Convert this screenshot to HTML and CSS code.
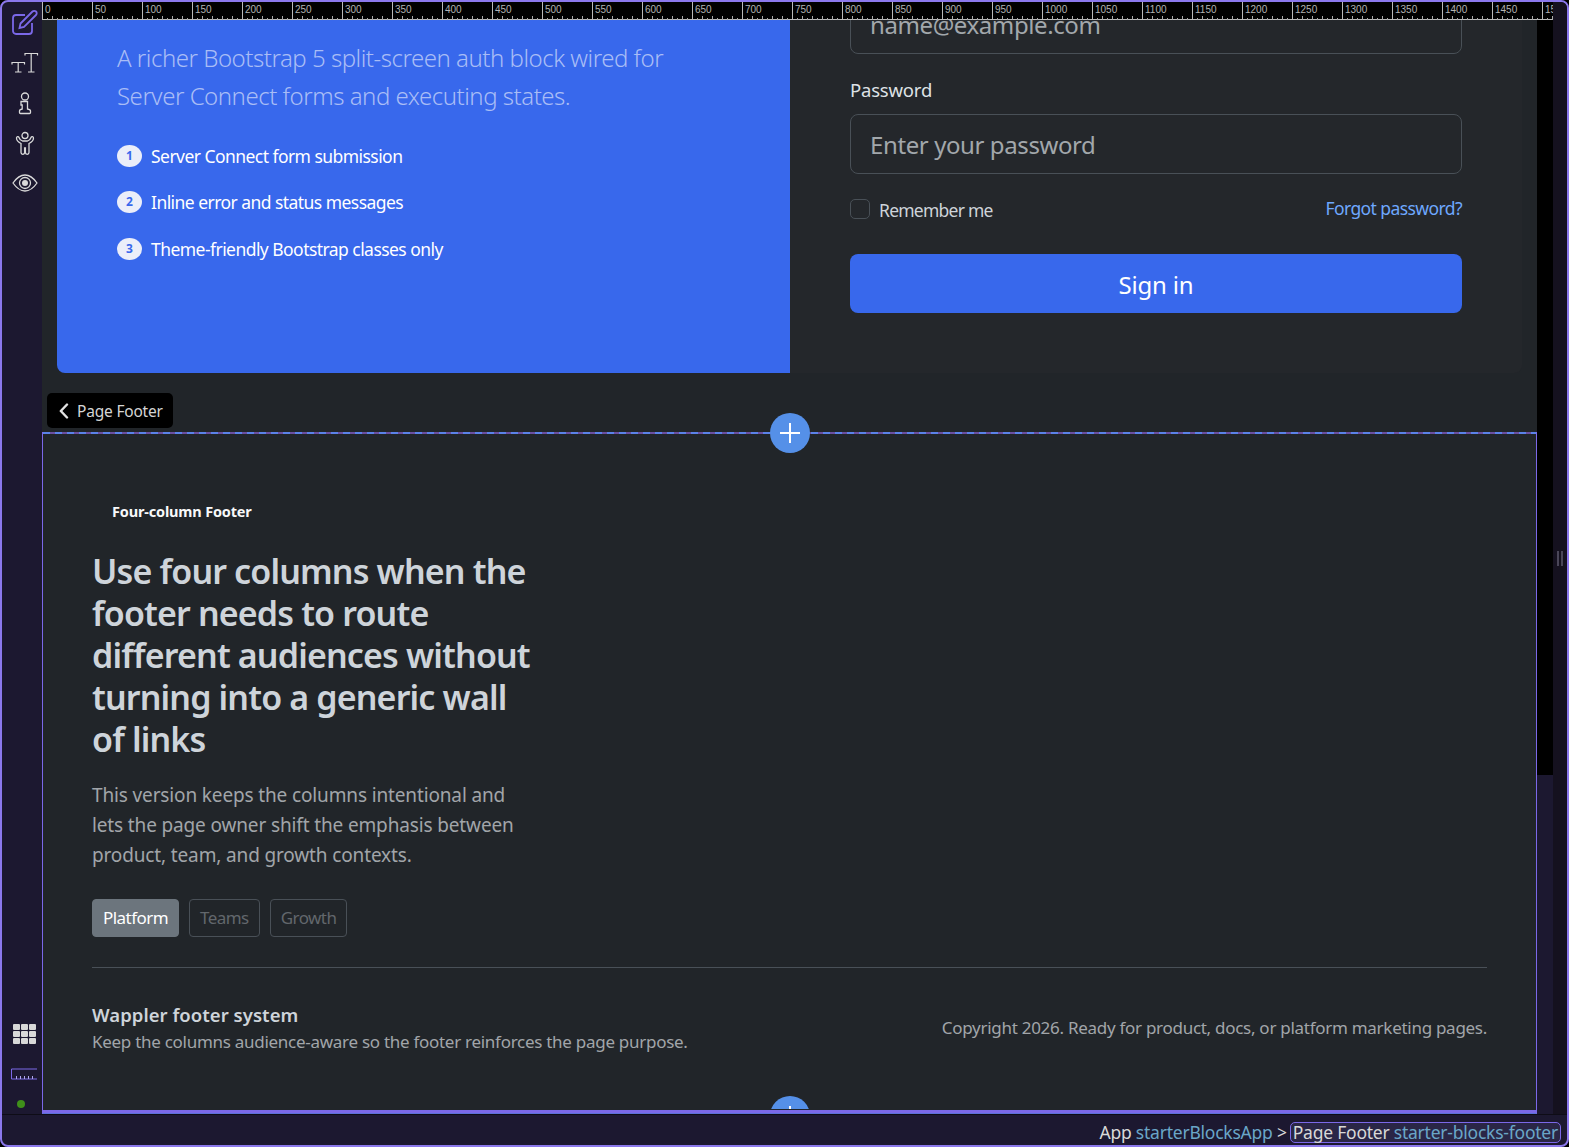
FILE: index.html
```html
<!DOCTYPE html>
<html lang="en">
<head>
  <meta charset="UTF-8" />
  <title>Page Footer - starterBlocksApp</title>
  <link rel="stylesheet" href="styles.css">
</head>
<body>
  <div class="frame">
    <div class="work">
      <!-- left tools -->
      <aside class="tools">
        <div class="tools-top">
          <div class="tool"><svg width="28" height="28" viewBox="0 0 28 28" fill="none" stroke="#7b68e8" stroke-width="1.800"><path d="M21 14v8a3 3 0 0 1-3 3H5a3 3 0 0 1-3-3V9a3 3 0 0 1 3-3h9"/><path d="M9.500 14.500 21.500 2.500a2.300 2.300 0 0 1 3.500 3.500L13 18l-4.500 1z"/></svg></div>
          <div class="tool"><svg width="28" height="24" viewBox="0 0 28 24" fill="none" stroke="#d9d9d9" stroke-width="1.200"><path d="M1 13.500V11.500h12.500v2M7.200 11.500V21M4 21h6.500"/><path d="M14 4.500V2.500h12.500v2M20.200 2.500V21M17 21h6.500"/></svg></div>
          <div class="tool"><svg width="16" height="24" viewBox="0 0 16 24" fill="none" stroke="#d9d9d9" stroke-width="1.300"><circle cx="8" cy="5.500" r="3.500"/><path d="M5 10.500h5.500v7.500c1.500.3 3 .8 3 2v1.500a1 1 0 0 1-1 1H3.500a1 1 0 0 1-1-1V20c0-1.200 1.300-1.700 2.700-2v-4H4v-3.500z"/></svg></div>
          <div class="tool"><svg width="20" height="24" viewBox="0 0 20 24" fill="none" stroke="#d9d9d9" stroke-width="1.300"><circle cx="10" cy="4.500" r="3"/><path d="M6 21.500V12.500C4 11.500 1.500 9.500 1.500 7c0-1.500 2-1.800 2.500-.5.5 1.800 2 3 3.500 3.500h5c1.500-.5 3-1.700 3.500-3.500.5-1.300 2.500-1 2.500.5 0 2.500-2.500 4.500-4.500 5.500v9a1.800 1.800 0 0 1-3.600 0V17h-.8v4.500a1.800 1.800 0 0 1-3.600 0z"/></svg></div>
          <div class="tool"><svg width="26" height="20" viewBox="0 0 26 20" fill="none" stroke="#d9d9d9" stroke-width="1.300"><path d="M1 10C5 4.300 9 2 13 2s8 2.300 12 8c-4 5.700-8 8-12 8s-8-2.300-12-8z"/><circle cx="13" cy="10" r="5.500"/><circle cx="13" cy="10" r="3" fill="#d9d9d9" stroke="none"/></svg></div>
        </div>
        <div class="tools-bottom">
          <div class="apps">
            <i></i><i></i><i></i><i></i><i></i><i></i><i></i><i></i><i></i>
          </div>
          <svg class="ruler-icon" width="27" height="12" viewBox="0 0 27 12" fill="none" stroke="#7b68e8" stroke-width="1"><path d="M27 1H1.500v10H27"/><path d="M6.500 11V8M10.500 11V8M14.500 11V8M18.500 11V8M22.500 11V8" stroke="#b0a6ee"/></svg>
          <span class="status-dot"></span>
        </div>
      </aside>

      <div class="center">
        <!-- ruler -->
        <div class="ruler">
          <span>0</span><span>50</span><span>100</span><span>150</span><span>200</span><span>250</span><span>300</span><span>350</span><span>400</span><span>450</span><span>500</span><span>550</span><span>600</span><span>650</span><span>700</span><span>750</span><span>800</span><span>850</span><span>900</span><span>950</span><span>1000</span><span>1050</span><span>1100</span><span>1150</span><span>1200</span><span>1250</span><span>1300</span><span>1350</span><span>1400</span><span>1450</span><span>1500</span>
        </div>

        <div class="stage">
          <div class="canvas">
            <!-- auth block -->
            <section class="auth">
              <div class="auth-blue">
                <p class="auth-lead">A richer Bootstrap 5 split-screen auth block wired for Server Connect forms and executing states.</p>
                <ul class="steps">
                  <li><b>1</b>Server Connect form submission</li>
                  <li><b>2</b>Inline error and status messages</li>
                  <li><b>3</b>Theme-friendly Bootstrap classes only</li>
                </ul>
              </div>
              <div class="auth-form">
                <div class="input">name@example.com</div>
                <label class="form-label">Password</label>
                <div class="input">Enter your password</div>
                <div class="form-row">
                  <label class="check"><span class="check-box"></span>Remember me</label>
                  <a class="forgot" href="#">Forgot password?</a>
                </div>
                <button class="signin">Sign in</button>
              </div>
            </section>

            <div class="footer-tab-row">
              <div class="footer-tab">
                <svg width="10" height="16" viewBox="0 0 10 16" fill="none" stroke="#e3e3e3" stroke-width="2.400" stroke-linecap="round" stroke-linejoin="round"><path d="M8 1.500 1.800 8 8 14.500"/></svg>
                Page Footer
              </div>
            </div>

            <!-- selected footer -->
            <footer class="footer">
              <button class="add add-top"><svg width="20" height="20" viewBox="0 0 20 20" stroke="#fff" stroke-width="2"><path d="M0 10h20M10 0v20"/></svg></button>
              <div class="eyebrow">Four-column Footer</div>
              <h2 class="footer-title">Use four columns when the footer needs to route different audiences without turning into a generic wall of links</h2>
              <p class="footer-copy">This version keeps the columns intentional and lets the page owner shift the emphasis between product, team, and growth contexts.</p>
              <div class="tabs">
                <a class="tab tab-on" href="#">Platform</a>
                <a class="tab" href="#">Teams</a>
                <a class="tab" href="#">Growth</a>
              </div>
              <div class="footer-bottom">
                <div>
                  <div class="brand">Wappler footer system</div>
                  <div class="brand-sub">Keep the columns audience-aware so the footer reinforces the page purpose.</div>
                </div>
                <div class="legal">Copyright 2026. Ready for product, docs, or platform marketing pages.</div>
              </div>
              <button class="add add-bottom"><svg width="20" height="20" viewBox="0 0 20 20" stroke="#fff" stroke-width="2"><path d="M0 10h20M10 0v20"/></svg></button>
            </footer>
          </div>
          <div class="scroll-track"><div class="scroll-thumb"></div></div>
        </div>
      </div>

      <div class="side-handle"><span class="grip"></span></div>
    </div>

    <!-- breadcrumb -->
    <div class="crumbs">
      <span>App <em>starterBlocksApp</em> &gt;</span>
      <span class="crumb-on">Page Footer <em>starter-blocks-footer</em></span>
    </div>
  </div>
</body>
</html>
```

FILE: styles.css
```css
html, body {
  margin: 0;
  padding: 0;
  height: 100%;
  background: #000;
  overflow: hidden;
  font-family: "Noto Sans", "Open Sans", sans-serif;
}

.frame {
  box-sizing: border-box;
  height: 100vh;
  display: flex;
  flex-direction: column;
  background: #1c1830;
  border: 2px solid #8b78ec;
  border-radius: 8px;
  overflow: hidden;
}

.work {
  flex: 1;
  display: flex;
  min-height: 0;
}

/* left tools */
.tools {
  box-sizing: border-box;
  width: 40px;
  flex: none;
  padding-left: 5px;
  display: flex;
  flex-direction: column;
  justify-content: space-between;
  align-items: center;
}
.tools-top {
  display: flex;
  flex-direction: column;
  align-items: center;
  padding-top: 1px;
}
.tool {
  height: 40px;
  display: flex;
  align-items: center;
  justify-content: center;
}
.tools-bottom {
  display: flex;
  flex-direction: column;
  align-items: center;
  padding-bottom: 6px;
}
.apps {
  display: grid;
  grid-template-columns: repeat(3, 7px);
  grid-auto-rows: 6px;
  gap: 1px;
  margin-bottom: 24px;
}
.apps i {
  border-radius: 1px;
  background: #d8d8d8;
}
.ruler-icon {
  margin: 0 2px 20px 0;
}
.status-dot {
  width: 8px;
  height: 8px;
  border-radius: 50%;
  background: #3f8f1a;
  margin-right: 7px;
}

.center {
  flex: 1;
  min-width: 0;
  display: flex;
  flex-direction: column;
}

/* ruler */
.ruler {
  flex: none;
  height: 18px;
  display: flex;
  overflow: hidden;
  background-color: #000;
  background-image:
    repeating-linear-gradient(90deg, #aaa 0 1px, transparent 1px 10px),
    repeating-linear-gradient(90deg, #aaa 0 1px, transparent 1px 5px),
    linear-gradient(#bbb, #bbb);
  background-size: 100% 4px, 100% 2px, 100% 1px;
  background-position: 0 bottom, 0 bottom, 0 bottom;
  background-repeat: no-repeat;
}
.ruler span {
  flex: 0 0 50px;
  box-sizing: border-box;
  border-left: 1px solid #bbb;
  padding: 3px 0 0 2px;
  font: 10px/10px "Liberation Sans", sans-serif;
  color: #b4b4b4;
}

.stage {
  flex: 1;
  display: flex;
  min-height: 0;
}

.canvas {
  flex: 1;
  min-width: 0;
  background: #212529;
  color: #dee2e6;
}

.scroll-track {
  flex: none;
  width: 16px;
  background: #1c1830;
}
.scroll-thumb {
  height: 755px;
  background: #000;
}

.side-handle {
  flex: none;
  width: 14px;
  background: #15111f;
  display: flex;
  align-items: center;
  justify-content: center;
}
.grip {
  width: 2px;
  height: 15px;
  border-left: 2px solid #4a4658;
  border-right: 2px solid #4a4658;
  margin-top: 1px;
}

/* auth block */
.auth {
  display: flex;
  height: 353px;
  margin: 0 15px;
  overflow: hidden;
  background: #24272b;
  border-radius: 0 0 8px 8px;
}
.auth-blue {
  flex: 0 0 733px;
  box-sizing: border-box;
  padding: 19px 60px 0;
  background: #3868ec;
  color: #fff;
}
.auth-lead {
  margin: 0 0 29px;
  font-size: 24px;
  font-weight: 300;
  line-height: 38px;
  color: #a9bdf6;
  letter-spacing: -0.48px;
}
.steps {
  list-style: none;
  margin: 0;
  padding: 0;
}
.steps li {
  display: flex;
  align-items: center;
  gap: 9px;
  height: 24px;
  margin-bottom: 22.400px;
  font-size: 17.500px;
  letter-spacing: -0.55px;
}
.steps b {
  width: 25px;
  height: 22px;
  border-radius: 50%;
  background: #ebeef9;
  color: #3868ec;
  font-size: 12px;
  font-weight: 700;
  line-height: 22px;
  text-align: center;
  letter-spacing: 0;
}

.auth-form {
  flex: 1;
  padding: 0 60px;
  margin-top: -26px;
}
.input {
  box-sizing: border-box;
  height: 60px;
  padding: 0 19px;
  border: 1px solid #495057;
  border-radius: 8px;
  font-size: 24px;
  line-height: 59px;
  color: #a2a7ab;
  letter-spacing: -0.4px;
}
.form-label {
  display: block;
  margin: 22px 0 10px;
  font-size: 18.500px;
  line-height: 28px;
  letter-spacing: -0.2px;
}
.form-row {
  display: flex;
  justify-content: space-between;
  align-items: center;
  margin-top: 21px;
  height: 30px;
}
.check {
  display: flex;
  align-items: center;
  gap: 9px;
  font-size: 17.500px;
  color: #ced4da;
  letter-spacing: -0.75px;
}
.check-box {
  box-sizing: border-box;
  width: 20px;
  height: 20px;
  border: 1px solid #495057;
  border-radius: 5px;
  margin-top: -2px;
}
.forgot {
  font-size: 17.500px;
  color: #6ea8fe;
  text-decoration: none;
  letter-spacing: -0.58px;
  margin-top: -5px;
}
.signin {
  display: block;
  width: 100%;
  height: 59px;
  margin-top: 29px;
  padding: 2px 0 0;
  border: 0;
  border-radius: 8px;
  background: #3868ec;
  color: #fff;
  font: 24px "Noto Sans", sans-serif;
  letter-spacing: -0.2px;
}

.footer-tab-row {
  height: 59px;
  position: relative;
}
.footer-tab {
  position: absolute;
  left: 5px;
  top: 20px;
  box-sizing: border-box;
  height: 35px;
  width: 126px;
  display: flex;
  align-items: center;
  gap: 8px;
  padding-left: 12px;
  background: #000;
  border-radius: 5px;
  font-size: 15.500px;
  color: #d5d5d5;
  letter-spacing: -0.2px;
}

/* selected footer */
.footer {
  position: relative;
  box-sizing: border-box;
  height: 682px;
  padding: 69px 49px 0;
  background: #212529;
  border-left: 1px solid #7b68e8;
  border-right: 1px solid #7b68e8;
  border-bottom: 1px solid #5c70d8;
  box-shadow: inset 0 -3px 0 #7b68e8;
}
.footer::before {
  content: "";
  position: absolute;
  top: 0; left: 0; right: 0;
  height: 2px;
  background: repeating-linear-gradient(90deg, #5b82e8 0 7px, #6a4fa0 7px 12px);
}
.add {
  position: absolute;
  z-index: 1;
  left: 727px;
  width: 40px;
  height: 40px;
  padding: 0;
  display: flex;
  align-items: center;
  justify-content: center;
  border: 0;
  border-radius: 50%;
  background: #5590e8;
}
.add-top { top: -19px; }
.add-bottom { bottom: -23px; clip-path: inset(0 0 27px 0); }

.eyebrow {
  padding-left: 20px;
  font-size: 14.500px;
  font-weight: 700;
  line-height: 20px;
  color: #f8f9fa;
  letter-spacing: -0.17px;
}
.footer-title {
  width: 445px;
  margin: 29px 0 0;
  font-size: 34px;
  font-weight: 600;
  line-height: 42px;
  color: #ced4da;
  letter-spacing: -0.85px;
}
.footer-copy {
  width: 440px;
  margin: 20px 0 0;
  font-size: 19px;
  line-height: 30px;
  color: #a1a5a9;
  letter-spacing: -0.14px;
}
.tabs {
  display: flex;
  gap: 10px;
  margin-top: 29px;
}
.tab {
  box-sizing: border-box;
  height: 38px;
  padding: 0 10px;
  border: 1px solid #495057;
  border-radius: 4px;
  font-size: 17px;
  line-height: 36px;
  color: #62676c;
  text-decoration: none;
  letter-spacing: -0.55px;
}
.tab-on {
  background: #6c757d;
  border-color: #6c757d;
  color: #fff;
}
.footer-bottom {
  display: flex;
  justify-content: space-between;
  align-items: center;
  margin-top: 30px;
  padding-top: 32px;
  border-top: 1px solid #495057;
}
.brand {
  font-size: 18.500px;
  font-weight: 600;
  line-height: 29px;
  color: #ced4da;
  letter-spacing: 0.04px;
}
.brand-sub, .legal {
  font-size: 17px;
  line-height: 25px;
  color: #a1a5a9;
  letter-spacing: -0.28px;
}

/* breadcrumb */
.crumbs {
  flex: none;
  height: 31px;
  box-sizing: border-box;
  display: flex;
  justify-content: flex-end;
  align-items: center;
  gap: 3px;
  padding: 4px 6px 0 0;
  border-top: 1px solid #0e0c16;
  font-size: 17.500px;
  color: #d8d8d8;
  letter-spacing: -0.23px;
}
.crumbs em {
  font-style: normal;
  color: #6aa6c8;
}
.crumb-on {
  box-sizing: border-box;
  height: 21px;
  line-height: 19px;
  padding: 0 2px;
  border: 1px solid #7b68e8;
  border-radius: 5px;
  background: #2a2646;
}
```
